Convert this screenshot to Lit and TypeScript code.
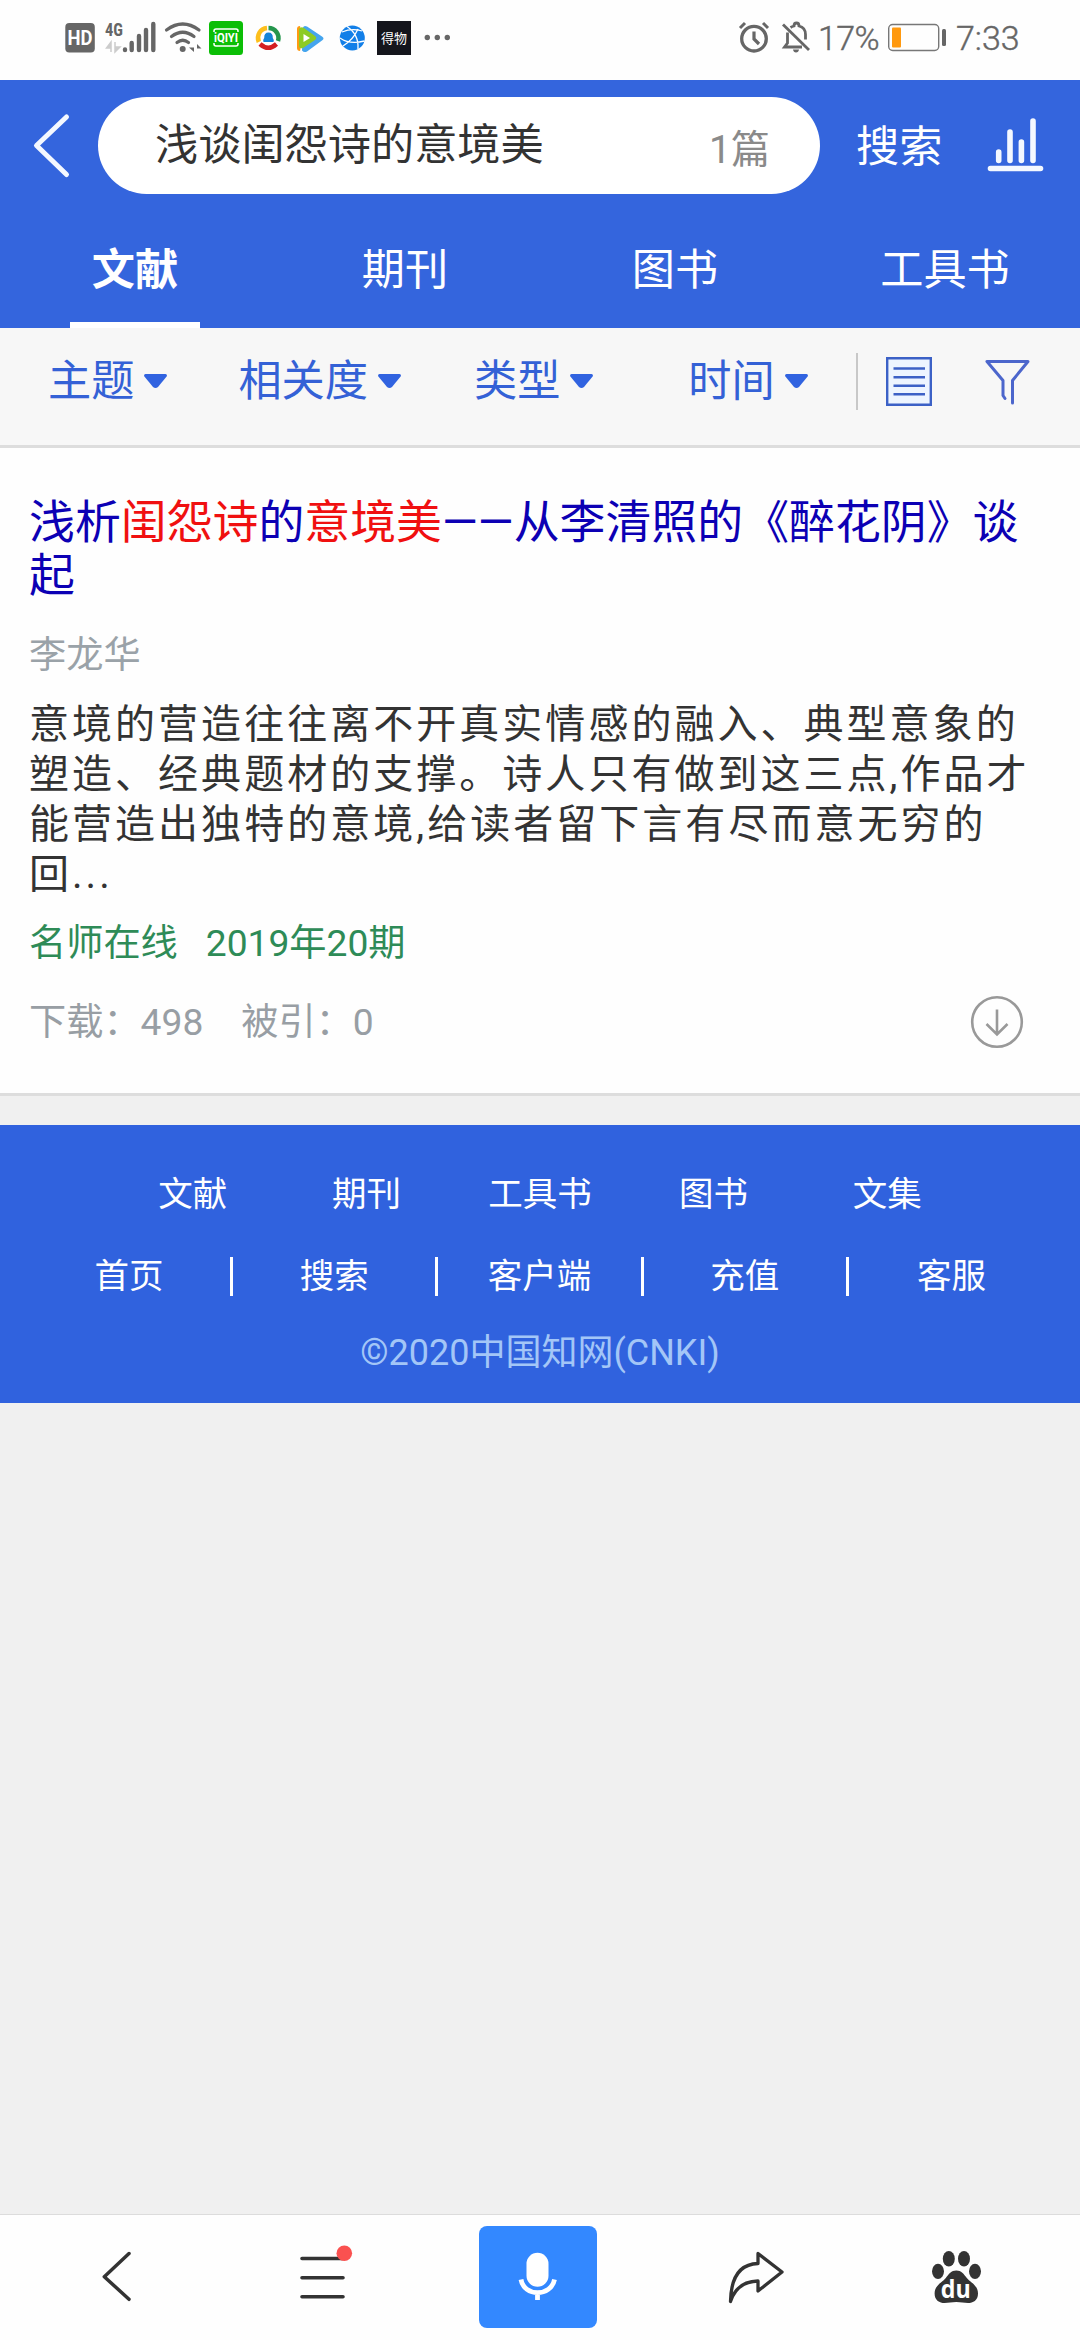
import { LitElement, html, svg, css, TemplateResult, SVGTemplateResult } from "lit";
import { customElement, state, property } from "lit/decorators.js";
import { classMap } from "lit/directives/class-map.js";

const icon = (x: number, y: number, w: number, h: number, body: SVGTemplateResult): TemplateResult =>
  html`<svg class="icon" width=${w} height=${h} viewBox="${x} ${y} ${w} ${h}" fill="none">${body}</svg>`;

const base = css`
  * { box-sizing: border-box; }
  :host {
    display: block;
    font-family: Roboto, "Noto Sans CJK SC", sans-serif;
  }
  .icon { display: block; flex: none; overflow: visible; }
`;

@customElement("status-bar")
class StatusBar extends LitElement {
  static styles = [base, css`
    .bar {
      height: 80px;
      padding: 0 60px 5px 65px;
      display: flex;
      align-items: center;
      justify-content: space-between;
      background: #fefefe;
      color: #666;
    }
    .group { display: flex; align-items: center; }
    .hd { font: 700 20px Roboto, sans-serif; }
    .net { font: 700 18px "Roboto Condensed", Roboto, sans-serif; }
    .qiyi { font: 700 13px Roboto, sans-serif; }
    .dewu { font: 400 13px "Noto Sans CJK SC", sans-serif; }
    .num { font-size: 34px; line-height: 40px; font-weight: 300; -webkit-text-stroke: 0.4px #666; }
    .pct { margin-left: 8px; width: 63px; letter-spacing: -0.6px; }
    .time { margin-left: 10px; width: 64px; }
    .bell { margin-left: 13px; }
    .battery { margin-left: 7px; }
  `];

  render() {
    return html`<div class="bar">
      <div class="group">
        ${icon(65, 21, 40, 34, svg`
          <rect x="65.3" y="23" width="29.5" height="29.5" rx="4" fill="#666"/>
          <text class="hd" x="80" y="45" text-anchor="middle" textLength="25" lengthAdjust="spacingAndGlyphs" fill="#fff">HD</text>`)}
        ${icon(105, 21, 60, 34, svg`
          <text class="net" x="105" y="36" textLength="18" lengthAdjust="spacingAndGlyphs" fill="#666">4G</text>
          <path d="M111 52V42L106.500 48H111M115 42v10l5-5h-5" fill="#ccc" stroke="#ccc" stroke-width="1.500"/>
          <path d="M125 49.500v.6M131.700 43v7M139 36v14M146 30v20M153.300 24v26" stroke="#666" stroke-width="4.400" stroke-linecap="round"/>`)}
        ${icon(165, 21, 44, 34, svg`
          <path d="M166.500 30Q182.700 18 199 30M171.500 36.500Q182.700 28 194 36.500M177 42.500Q182.700 38 188.500 42.500" stroke="#666" stroke-width="3.200" stroke-linecap="round"/>
          <circle cx="182.700" cy="49" r="3" fill="#666"/>
          <path d="M194 44v8l-5-4.500h5zM197 52v-8l4.500 4.500H197z" fill="#666"/>`)}
        ${icon(209, 21, 43, 34, svg`
          <rect x="209" y="21" width="34" height="34" rx="3.500" fill="#0bbe06"/>
          <path d="M214 32v-1q0-2 2-2h20q2 0 2 2v1M214 43v1q0 2 2 2h20q2 0 2-2v-1" stroke="#fff" stroke-width="1.500"/>
          <text class="qiyi" x="226" y="42.300" text-anchor="middle" textLength="24" lengthAdjust="spacingAndGlyphs" fill="#fff">iQIYI</text>`)}
        ${icon(252, 21, 43, 34, svg`
          <path d="M267 28A10 10 0 0 0 258.800 42" stroke="#fdbf1c" stroke-width="4.500"/>
          <path d="M268.500 28A10 10 0 0 1 278 41" stroke="#25964d" stroke-width="4.500"/>
          <path d="M260 44Q268.300 51.500 276.500 44" stroke="#d41f22" stroke-width="4.500"/>
          <path d="M263.500 42q-1-2 .7-4-.2-5.500 4.300-5.500t4.300 5.500q1.700 2 .7 4z" fill="#1484d8"/>`)}
        ${icon(295, 21, 42, 34, svg`
          <path d="M297 29q0-3 3-3l3 12-3 13q-3 0-3-3z" fill="#ff9a12"/>
          <path d="M303 27.500q1-2.500 4-1l15 10q3 2 0 4l-15 11q-3 1.500-5-1z" fill="#45a5ee"/>
          <path d="M299 29q2-3 5-1l11 8q2.500 2 0 4l-12 8q-4 1-4-2z" fill="#8dcb24"/>
          <path d="M303.500 34v8l6.500-4z" fill="#fff"/>`)}
        ${icon(337, 21, 40, 34, svg`
          <circle cx="352.300" cy="38" r="12.500" fill="#127fe8"/>
          <path d="M347 26.500q12 8 11 22.500M340 38q10 7 24.500 3M343 46q10-6 15-17M342 32q10-4 20-1" stroke="#fff" stroke-width="1.300"/>`)}
        ${icon(377, 21, 47, 34, svg`
          <rect x="377" y="21" width="34" height="34" fill="#14151c"/>
          <text class="dewu" x="394" y="43" text-anchor="middle" fill="#fff">得物</text>`)}
        ${icon(424, 21, 27, 34, svg`
          <g fill="#666"><circle cx="427.300" cy="37.500" r="2.700"/><circle cx="437.300" cy="37.500" r="2.700"/><circle cx="447.300" cy="37.500" r="2.700"/></g>`)}
      </div>
      <div class="group">
        ${icon(737, 21, 30, 34, svg`
          <circle cx="752" cy="38.700" r="12.300" stroke="#666" stroke-width="3.300"/>
          <path d="M752 31.500v7.500l5 5" stroke="#666" stroke-width="3.200"/>
          <path d="M738 28l5-5M766 28l-5-5" stroke="#666" stroke-width="3"/>`)}
        <div class="bell">${icon(780, 21, 28, 34, svg`
          <path d="M781 24.500L807 50" stroke="#666" stroke-width="2.800"/>
          <path d="M785.500 32.500V43l-3 4H800M788.500 27.500q1.500-1 3.500-1.500 0-3 2.500-3t2.500 3q6.500 1.500 6.500 8.500v5" stroke="#666" stroke-width="2.800"/>
          <path d="M791 49.500h6q-.5 3-3 3t-3-3z" fill="#666"/>`)}</div>
        <span class="num pct">17%</span>
        <div class="battery">${icon(887, 21, 58, 34, svg`
          <rect x="887.700" y="24.500" width="50" height="26" rx="4" stroke="#777" stroke-width="1.400"/>
          <rect x="891" y="27.500" width="9" height="20" rx="1" fill="#ff990f"/>
          <rect x="941" y="29" width="4" height="17" rx="1.500" fill="#666"/>`)}</div>
        <span class="num time">7:33</span>
      </div>
    </div>`;
  }
}

@customElement("search-header")
class SearchHeader extends LitElement {
  @state() private active = 0;
  private tabs = ["文献", "期刊", "图书", "工具书"];

  static styles = [base, css`
    :host { background: #3465dd; color: #fff; }
    .search { display: flex; align-items: center; height: 131px; padding: 0 37px 0 34px; }
    .box {
      display: flex; align-items: center; justify-content: space-between; flex: none;
      width: 722px; height: 97px; margin-left: 29px; padding: 0 50px 0 57px;
      border-radius: 49px; background: #fff; color: #333; font-size: 43.2px;
    }
    .query { line-height: 60px; padding-top: 1px; }
    .count { font-size: 39px; color: #8a8a8a; line-height: 60px; padding-top: 8px; }
    .go { flex: none; margin-left: 36px; font-size: 43.2px; line-height: 60px; padding-top: 5px; white-space: nowrap; }
    .stats { margin-left: auto; }
    .tabs { display: grid; grid-template-columns: repeat(4, 1fr); height: 117px; }
    .tab {
      display: flex; flex-direction: column; align-items: center; justify-content: space-between;
      padding-top: 30px; font-size: 43.2px; line-height: 60px;
    }
    .line { width: 130px; height: 6px; }
    .on { font-weight: 700; }
    .on .line { background: #fff; }
  `];

  render() {
    return html`
      <div class="search">
        ${icon(34, 114, 35, 63, svg`<path d="M66.500 117L36.500 145.500 66.500 174.500" stroke="#f4f8ff" stroke-width="5" stroke-linecap="round" stroke-linejoin="round"/>`)}
        <div class="box"><span class="query">浅谈闺怨诗的意境美</span><span class="count">1篇</span></div>
        <span class="go">搜索</span>
        <div class="stats">${icon(987, 117, 56, 57, svg`
          <path d="M990.500 168.500h50M998.700 152v8.500M1010 132v28.500M1021.400 142v18.500M1033 121v39.500" stroke="#f4f8ff" stroke-width="5.600" stroke-linecap="round"/>`)}</div>
      </div>
      <div class="tabs">
        ${this.tabs.map((t, i) => html`
          <div class=${classMap({ tab: true, on: i === this.active })} @click=${() => (this.active = i)}>
            <span>${t}</span><span class="line"></span>
          </div>`)}
      </div>`;
  }
}

@customElement("filter-bar")
class FilterBar extends LitElement {
  static styles = [base, css`
    .bar {
      display: flex; align-items: flex-start; height: 120px; padding: 24px 49px 0 48px;
      background: #f7f7f7; border-bottom: 3px solid #ddd; color: #3461d6;
    }
    .item { display: flex; align-items: center; gap: 10px; font-size: 43.2px; line-height: 60px; }
    .item .icon { margin-bottom: 2px; }
    .i1 { margin-left: 71px; }
    .i2 { margin-left: 73px; }
    .i3 { margin-left: 95px; }
    .rule { width: 2px; height: 57px; margin: 1px 0 0 48px; background: #c8c8c8; }
    .list { margin: 5px 0 0 28px; }
    .funnel { margin: 7px 0 0 53px; }
  `];

  render() {
    return html`<div class="bar">
      ${["主题", "相关度", "类型", "时间"].map((t, i) => html`
        <div class="item i${i}"><span>${t}</span>
          ${icon(0, 0, 23, 14, svg`<path d="M1.500 0h20q1.500 0 1.500 2L14 13q-2.500 2-5 0L0 2Q0 0 1.500 0z" fill="#3163e0"/>`)}
        </div>`)}
      <div class="rule"></div>
      <div class="list">${icon(886, 357, 46, 49, svg`
        <path d="M887.200 358.200h43.600v46.600h-43.600z" fill="#edf5ff" stroke="#3c61c6" stroke-width="2.400"/>
        <path d="M893.500 368.500H925M893.500 377.200H925M893.500 385.800H925M893.500 394.300H925" stroke="#3c61c6" stroke-width="2.600"/>`)}</div>
      <div class="funnel">${icon(985, 359, 45, 45, svg`
        <path d="M1005 398.500l-2-3V380.500L987 361.500h41L1012.500 380.500V403" stroke="#4c66cc" stroke-width="3" stroke-linejoin="round" stroke-linecap="round"/>`)}</div>
    </div>`;
  }
}

interface Part { text: string; hit?: boolean }
interface Paper { title: Part[]; author: string; summary: string; journal: string; issue: string; downloads: number; cited: number }

@customElement("paper-card")
class PaperCard extends LitElement {
  @property({ attribute: false }) paper!: Paper;

  static styles = [base, css`
    .card { height: 648px; padding: 48px 30px 0 29px; background: #fefefe; border-bottom: 3px solid #ddd; }
    .title { margin: 0; font-size: 45.9px; font-weight: 400; line-height: 52.500px; color: #0c00b4; }
    .hit { color: #f01010; }
    .author { margin-top: 27px; font-size: 37.200px; line-height: 54px; color: #9aa2a8; }
    .summary { margin: 18px 0 0; font-size: 40px; letter-spacing: 3.030px; line-height: 50px; color: #333; }
    .source { display: flex; gap: 28px; margin-top: 16px; font-size: 37.200px; line-height: 54px; color: #2e8b57; }
    .foot { display: flex; align-items: center; justify-content: space-between; margin-top: 25px; padding-right: 27px; }
    .stats { display: flex; gap: 38px; font-size: 37.200px; line-height: 54px; color: #989ea4; }
  `];

  render() {
    const p = this.paper;
    return html`<article class="card">
      <h2 class="title">${p.title.map(s => (s.hit ? html`<span class="hit">${s.text}</span>` : s.text))}</h2>
      <div class="author">${p.author}</div>
      <p class="summary">${p.summary}</p>
      <div class="source"><span>${p.journal}</span><span>${p.issue}</span></div>
      <div class="foot">
        <div class="stats"><span>下载：${p.downloads}</span><span>被引：${p.cited}</span></div>
        ${icon(971, 995.5, 52, 52, svg`
          <circle cx="997" cy="1021.500" r="24.800" stroke="#999" stroke-width="2.600"/>
          <path d="M997 1009v25M986.500 1023.500L997 1034l10.500-10.500" stroke="#999" stroke-width="2.600"/>`)}
      </div>
    </article>`;
  }
}

@customElement("site-footer")
class SiteFooter extends LitElement {
  static styles = [base, css`
    .footer { height: 278px; margin-top: 29px; padding-top: 42px; background: #3062de; color: #fff; font-size: 34.500px; }
    .row { display: grid; grid-template-columns: repeat(5, 1fr); margin: 0 auto; text-align: center; }
    .top { width: 868px; line-height: 54px; }
    .bottom { width: 1026px; margin: 36px 26px 0 28px; line-height: 39px; }
    .cell:not(:last-child) { border-right: 3px solid #fff; }
    .copy { margin-top: 30px; text-align: center; font-size: 36px; line-height: 54px; color: #a3c6f7; }
  `];

  render() {
    return html`<footer class="footer">
      <div class="row top">${["文献", "期刊", "工具书", "图书", "文集"].map(t => html`<span>${t}</span>`)}</div>
      <div class="row bottom">${["首页", "搜索", "客户端", "充值", "客服"].map(t => html`<span class="cell">${t}</span>`)}</div>
      <div class="copy">©2020中国知网(CNKI)</div>
    </footer>`;
  }
}

@customElement("browser-toolbar")
class BrowserToolbar extends LitElement {
  static styles = [base, css`
    .bar {
      display: flex; align-items: center; height: 126px; padding: 0 99px 1px 102px;
      background: #fefefe; border-top: 1px solid #dcdcdc;
    }
    .menu { margin-left: 167px; }
    .mic {
      display: grid; place-items: center; width: 120px; height: 102px; margin-left: 126px;
      border-radius: 8px; background: #3388ff;
    }
    .share { margin-left: 131px; }
    .paw { margin-left: 147px; }
    .du { font: 700 25px "Open Sans", "Noto Sans", sans-serif; }
  `];

  render() {
    return html`<nav class="bar">
      ${icon(102, 2250, 30, 54, svg`<path d="M129 2253.500L104.300 2276.700 129 2299.300" stroke="#333" stroke-width="3.500" stroke-linecap="round" stroke-linejoin="round"/>`)}
      <div class="menu">${icon(299, 2244, 54, 66, svg`
        <path d="M302 2258.500h41M302 2277.700h41M302 2296.700h41" stroke="#333" stroke-width="3.600" stroke-linecap="round"/>
        <circle cx="344.300" cy="2253.300" r="7.800" fill="#fa5150"/>`)}</div>
      <div class="mic">${icon(519, 2252, 40, 50, svg`
        <rect x="527.500" y="2252.700" width="22" height="34" rx="11" fill="#fff"/>
        <path d="M522 2279.500C525 2297 552 2297 555.500 2279.500M538.500 2293v7" stroke="#fff" stroke-width="4.800"/>`)}</div>
      <div class="share">${icon(729, 2250, 57, 54, svg`
        <path d="M759 2253.500L783 2272 759 2291V2281Q738 2281.500 731.500 2301.500C732 2275 742 2264 759 2263.500Z" stroke="#333" stroke-width="3.300" stroke-linejoin="round"/>`)}</div>
      <div class="paw">${icon(932, 2250, 49, 54, svg`
        <g fill="#333">
          <ellipse cx="938" cy="2271.300" rx="6" ry="7.600"/><ellipse cx="948.800" cy="2258.700" rx="6" ry="7.800"/>
          <ellipse cx="964" cy="2258.700" rx="6" ry="7.800"/><ellipse cx="975" cy="2271.300" rx="6" ry="7.600"/>
          <path d="M956.300 2270.500c5 0 7.500 3.500 10.500 7.500s11.200 7 11.200 15.500c0 7-5 9.500-10 9.500-4 0-7-.9-11.700-.9s-7.700.9-11.700.9c-5 0-10-2.500-10-9.500 0-8.500 8.200-11.500 11.200-15.500s5.500-7.500 10.500-7.500z"/>
        </g>
        <text class="du" x="955.800" y="2298" text-anchor="middle" textLength="30" lengthAdjust="spacingAndGlyphs" fill="#fff">du</text>`)}</div>
    </nav>`;
  }
}

@customElement("app-root")
class AppRoot extends LitElement {
  private paper: Paper = {
    title: [
      { text: "浅析" }, { text: "闺怨诗", hit: true }, { text: "的" }, { text: "意境美", hit: true },
      { text: "——从李清照的《醉花阴》谈起" },
    ],
    author: "李龙华",
    summary: "意境的营造往往离不开真实情感的融入、典型意象的塑造、经典题材的支撑。诗人只有做到这三点,作品才能营造出独特的意境,给读者留下言有尽而意无穷的回...",
    journal: "名师在线",
    issue: "2019年20期",
    downloads: 498,
    cited: 0,
  };

  static styles = [base, css`
    .page { display: flex; flex-direction: column; width: 1080px; height: 2340px; overflow: hidden; background: #f0f0f0; }
    .space { flex: 1; }
  `];

  render() {
    return html`<div class="page" lang="zh-CN">
      <status-bar></status-bar>
      <search-header></search-header>
      <filter-bar></filter-bar>
      <paper-card .paper=${this.paper}></paper-card>
      <site-footer></site-footer>
      <div class="space"></div>
      <browser-toolbar></browser-toolbar>
    </div>`;
  }
}
